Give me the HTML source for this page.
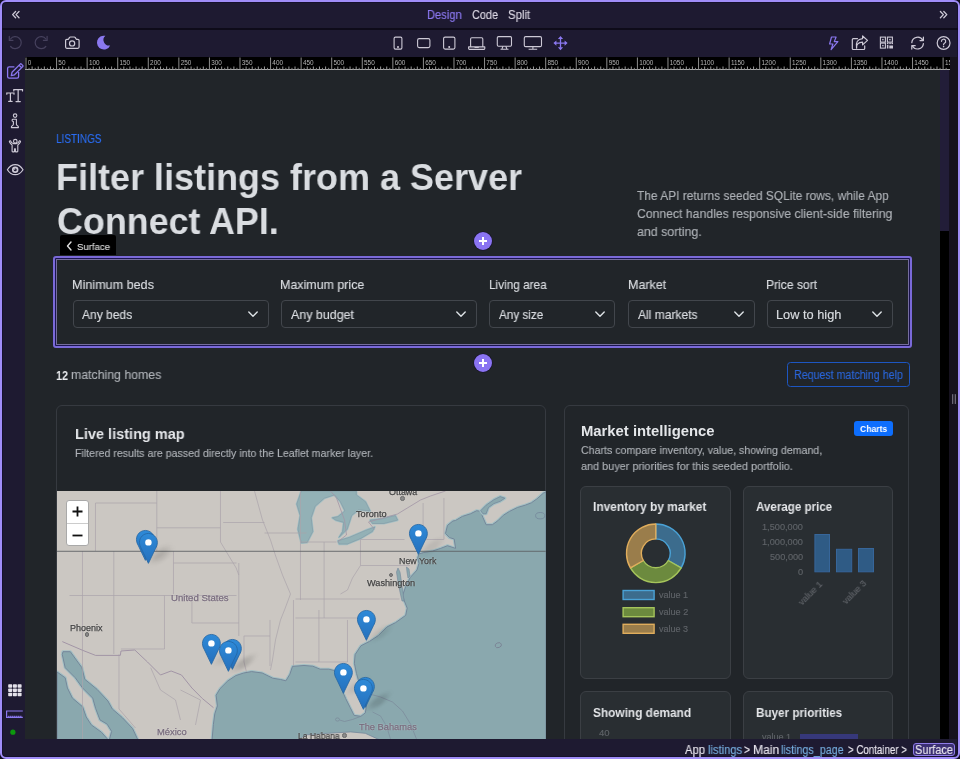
<!DOCTYPE html><html><head><meta charset="utf-8"><style>
html,body{margin:0;padding:0;width:960px;height:759px;overflow:hidden;background:#120e20}
.b,.t{position:absolute}
.t{white-space:nowrap;font-family:"Liberation Sans",sans-serif;will-change:transform;-webkit-text-stroke:0.15px currentColor}
svg{overflow:visible;will-change:transform}
</style></head><body>
<div class="b" style="left:0px;top:0px;width:960px;height:759px;box-sizing:border-box;border:2px solid #a08df8;border-radius:6px;background:#1e1a31;box-shadow:inset 0 0 0 1px #15102c"></div>
<div class="b" style="left:2px;top:28px;width:956px;height:1.5px;background:#0e0b19"></div>
<div class="b" style="left:25px;top:70px;width:915px;height:669px;background:#212529"></div>
<div class="b" style="left:940px;top:57px;width:10px;height:174px;background:#221d38"></div>
<div class="b" style="left:940px;top:231px;width:9px;height:508px;background:#000"></div>
<div class="b" style="left:949px;top:57px;width:9px;height:682px;background:#16121f"></div>
<svg class="b" style="left:951px;top:393px;" width="6" height="12" viewBox="0 0 6 12"><rect x="1" y="1" width="1.3" height="10" rx=".6" fill="#6a6675"/><rect x="3.7" y="1" width="1.3" height="10" rx=".6" fill="#6a6675"/></svg>
<svg class="b" style="left:25px;top:57px;overflow:hidden" width="925" height="13" viewBox="0 0 925 13"><rect x="0" y="0" width="925" height="13" fill="#000"/><rect x="0" y="12" width="925" height="1" fill="#a9a9a9"/><rect x="0.50" y="0.5" width="1" height="12" fill="#8d8d8d"/><text x="2.80" y="7.8" font-size="6.4" fill="#b4b4b4" font-family="Liberation Sans">0</text><rect x="3.56" y="10.8" width="1" height="2" fill="#8a8a8a"/><rect x="6.61" y="9.5" width="1" height="3" fill="#9a9a9a"/><rect x="9.67" y="10.8" width="1" height="2" fill="#8a8a8a"/><rect x="12.73" y="9.5" width="1" height="3" fill="#9a9a9a"/><rect x="15.79" y="10.8" width="1" height="2" fill="#8a8a8a"/><rect x="18.84" y="9.5" width="1" height="3" fill="#9a9a9a"/><rect x="21.90" y="10.8" width="1" height="2" fill="#8a8a8a"/><rect x="24.96" y="9.5" width="1" height="3" fill="#9a9a9a"/><rect x="28.01" y="10.8" width="1" height="2" fill="#8a8a8a"/><rect x="31.07" y="0.5" width="1" height="12" fill="#8d8d8d"/><text x="33.37" y="7.8" font-size="6.4" fill="#b4b4b4" font-family="Liberation Sans">50</text><rect x="34.13" y="10.8" width="1" height="2" fill="#8a8a8a"/><rect x="37.18" y="9.5" width="1" height="3" fill="#9a9a9a"/><rect x="40.24" y="10.8" width="1" height="2" fill="#8a8a8a"/><rect x="43.30" y="9.5" width="1" height="3" fill="#9a9a9a"/><rect x="46.35" y="10.8" width="1" height="2" fill="#8a8a8a"/><rect x="49.41" y="9.5" width="1" height="3" fill="#9a9a9a"/><rect x="52.47" y="10.8" width="1" height="2" fill="#8a8a8a"/><rect x="55.53" y="9.5" width="1" height="3" fill="#9a9a9a"/><rect x="58.58" y="10.8" width="1" height="2" fill="#8a8a8a"/><rect x="61.64" y="0.5" width="1" height="12" fill="#8d8d8d"/><text x="63.94" y="7.8" font-size="6.4" fill="#b4b4b4" font-family="Liberation Sans">100</text><rect x="64.70" y="10.8" width="1" height="2" fill="#8a8a8a"/><rect x="67.75" y="9.5" width="1" height="3" fill="#9a9a9a"/><rect x="70.81" y="10.8" width="1" height="2" fill="#8a8a8a"/><rect x="73.87" y="9.5" width="1" height="3" fill="#9a9a9a"/><rect x="76.92" y="10.8" width="1" height="2" fill="#8a8a8a"/><rect x="79.98" y="9.5" width="1" height="3" fill="#9a9a9a"/><rect x="83.04" y="10.8" width="1" height="2" fill="#8a8a8a"/><rect x="86.10" y="9.5" width="1" height="3" fill="#9a9a9a"/><rect x="89.15" y="10.8" width="1" height="2" fill="#8a8a8a"/><rect x="92.21" y="0.5" width="1" height="12" fill="#8d8d8d"/><text x="94.51" y="7.8" font-size="6.4" fill="#b4b4b4" font-family="Liberation Sans">150</text><rect x="95.27" y="10.8" width="1" height="2" fill="#8a8a8a"/><rect x="98.32" y="9.5" width="1" height="3" fill="#9a9a9a"/><rect x="101.38" y="10.8" width="1" height="2" fill="#8a8a8a"/><rect x="104.44" y="9.5" width="1" height="3" fill="#9a9a9a"/><rect x="107.50" y="10.8" width="1" height="2" fill="#8a8a8a"/><rect x="110.55" y="9.5" width="1" height="3" fill="#9a9a9a"/><rect x="113.61" y="10.8" width="1" height="2" fill="#8a8a8a"/><rect x="116.67" y="9.5" width="1" height="3" fill="#9a9a9a"/><rect x="119.72" y="10.8" width="1" height="2" fill="#8a8a8a"/><rect x="122.78" y="0.5" width="1" height="12" fill="#8d8d8d"/><text x="125.08" y="7.8" font-size="6.4" fill="#b4b4b4" font-family="Liberation Sans">200</text><rect x="125.84" y="10.8" width="1" height="2" fill="#8a8a8a"/><rect x="128.89" y="9.5" width="1" height="3" fill="#9a9a9a"/><rect x="131.95" y="10.8" width="1" height="2" fill="#8a8a8a"/><rect x="135.01" y="9.5" width="1" height="3" fill="#9a9a9a"/><rect x="138.06" y="10.8" width="1" height="2" fill="#8a8a8a"/><rect x="141.12" y="9.5" width="1" height="3" fill="#9a9a9a"/><rect x="144.18" y="10.8" width="1" height="2" fill="#8a8a8a"/><rect x="147.24" y="9.5" width="1" height="3" fill="#9a9a9a"/><rect x="150.29" y="10.8" width="1" height="2" fill="#8a8a8a"/><rect x="153.35" y="0.5" width="1" height="12" fill="#8d8d8d"/><text x="155.65" y="7.8" font-size="6.4" fill="#b4b4b4" font-family="Liberation Sans">250</text><rect x="156.41" y="10.8" width="1" height="2" fill="#8a8a8a"/><rect x="159.46" y="9.5" width="1" height="3" fill="#9a9a9a"/><rect x="162.52" y="10.8" width="1" height="2" fill="#8a8a8a"/><rect x="165.58" y="9.5" width="1" height="3" fill="#9a9a9a"/><rect x="168.63" y="10.8" width="1" height="2" fill="#8a8a8a"/><rect x="171.69" y="9.5" width="1" height="3" fill="#9a9a9a"/><rect x="174.75" y="10.8" width="1" height="2" fill="#8a8a8a"/><rect x="177.81" y="9.5" width="1" height="3" fill="#9a9a9a"/><rect x="180.86" y="10.8" width="1" height="2" fill="#8a8a8a"/><rect x="183.92" y="0.5" width="1" height="12" fill="#8d8d8d"/><text x="186.22" y="7.8" font-size="6.4" fill="#b4b4b4" font-family="Liberation Sans">300</text><rect x="186.98" y="10.8" width="1" height="2" fill="#8a8a8a"/><rect x="190.03" y="9.5" width="1" height="3" fill="#9a9a9a"/><rect x="193.09" y="10.8" width="1" height="2" fill="#8a8a8a"/><rect x="196.15" y="9.5" width="1" height="3" fill="#9a9a9a"/><rect x="199.20" y="10.8" width="1" height="2" fill="#8a8a8a"/><rect x="202.26" y="9.5" width="1" height="3" fill="#9a9a9a"/><rect x="205.32" y="10.8" width="1" height="2" fill="#8a8a8a"/><rect x="208.38" y="9.5" width="1" height="3" fill="#9a9a9a"/><rect x="211.43" y="10.8" width="1" height="2" fill="#8a8a8a"/><rect x="214.49" y="0.5" width="1" height="12" fill="#8d8d8d"/><text x="216.79" y="7.8" font-size="6.4" fill="#b4b4b4" font-family="Liberation Sans">350</text><rect x="217.55" y="10.8" width="1" height="2" fill="#8a8a8a"/><rect x="220.60" y="9.5" width="1" height="3" fill="#9a9a9a"/><rect x="223.66" y="10.8" width="1" height="2" fill="#8a8a8a"/><rect x="226.72" y="9.5" width="1" height="3" fill="#9a9a9a"/><rect x="229.78" y="10.8" width="1" height="2" fill="#8a8a8a"/><rect x="232.83" y="9.5" width="1" height="3" fill="#9a9a9a"/><rect x="235.89" y="10.8" width="1" height="2" fill="#8a8a8a"/><rect x="238.95" y="9.5" width="1" height="3" fill="#9a9a9a"/><rect x="242.00" y="10.8" width="1" height="2" fill="#8a8a8a"/><rect x="245.06" y="0.5" width="1" height="12" fill="#8d8d8d"/><text x="247.36" y="7.8" font-size="6.4" fill="#b4b4b4" font-family="Liberation Sans">400</text><rect x="248.12" y="10.8" width="1" height="2" fill="#8a8a8a"/><rect x="251.17" y="9.5" width="1" height="3" fill="#9a9a9a"/><rect x="254.23" y="10.8" width="1" height="2" fill="#8a8a8a"/><rect x="257.29" y="9.5" width="1" height="3" fill="#9a9a9a"/><rect x="260.34" y="10.8" width="1" height="2" fill="#8a8a8a"/><rect x="263.40" y="9.5" width="1" height="3" fill="#9a9a9a"/><rect x="266.46" y="10.8" width="1" height="2" fill="#8a8a8a"/><rect x="269.52" y="9.5" width="1" height="3" fill="#9a9a9a"/><rect x="272.57" y="10.8" width="1" height="2" fill="#8a8a8a"/><rect x="275.63" y="0.5" width="1" height="12" fill="#8d8d8d"/><text x="277.93" y="7.8" font-size="6.4" fill="#b4b4b4" font-family="Liberation Sans">450</text><rect x="278.69" y="10.8" width="1" height="2" fill="#8a8a8a"/><rect x="281.74" y="9.5" width="1" height="3" fill="#9a9a9a"/><rect x="284.80" y="10.8" width="1" height="2" fill="#8a8a8a"/><rect x="287.86" y="9.5" width="1" height="3" fill="#9a9a9a"/><rect x="290.92" y="10.8" width="1" height="2" fill="#8a8a8a"/><rect x="293.97" y="9.5" width="1" height="3" fill="#9a9a9a"/><rect x="297.03" y="10.8" width="1" height="2" fill="#8a8a8a"/><rect x="300.09" y="9.5" width="1" height="3" fill="#9a9a9a"/><rect x="303.14" y="10.8" width="1" height="2" fill="#8a8a8a"/><rect x="306.20" y="0.5" width="1" height="12" fill="#8d8d8d"/><text x="308.50" y="7.8" font-size="6.4" fill="#b4b4b4" font-family="Liberation Sans">500</text><rect x="309.26" y="10.8" width="1" height="2" fill="#8a8a8a"/><rect x="312.31" y="9.5" width="1" height="3" fill="#9a9a9a"/><rect x="315.37" y="10.8" width="1" height="2" fill="#8a8a8a"/><rect x="318.43" y="9.5" width="1" height="3" fill="#9a9a9a"/><rect x="321.49" y="10.8" width="1" height="2" fill="#8a8a8a"/><rect x="324.54" y="9.5" width="1" height="3" fill="#9a9a9a"/><rect x="327.60" y="10.8" width="1" height="2" fill="#8a8a8a"/><rect x="330.66" y="9.5" width="1" height="3" fill="#9a9a9a"/><rect x="333.71" y="10.8" width="1" height="2" fill="#8a8a8a"/><rect x="336.77" y="0.5" width="1" height="12" fill="#8d8d8d"/><text x="339.07" y="7.8" font-size="6.4" fill="#b4b4b4" font-family="Liberation Sans">550</text><rect x="339.83" y="10.8" width="1" height="2" fill="#8a8a8a"/><rect x="342.88" y="9.5" width="1" height="3" fill="#9a9a9a"/><rect x="345.94" y="10.8" width="1" height="2" fill="#8a8a8a"/><rect x="349.00" y="9.5" width="1" height="3" fill="#9a9a9a"/><rect x="352.06" y="10.8" width="1" height="2" fill="#8a8a8a"/><rect x="355.11" y="9.5" width="1" height="3" fill="#9a9a9a"/><rect x="358.17" y="10.8" width="1" height="2" fill="#8a8a8a"/><rect x="361.23" y="9.5" width="1" height="3" fill="#9a9a9a"/><rect x="364.28" y="10.8" width="1" height="2" fill="#8a8a8a"/><rect x="367.34" y="0.5" width="1" height="12" fill="#8d8d8d"/><text x="369.64" y="7.8" font-size="6.4" fill="#b4b4b4" font-family="Liberation Sans">600</text><rect x="370.40" y="10.8" width="1" height="2" fill="#8a8a8a"/><rect x="373.45" y="9.5" width="1" height="3" fill="#9a9a9a"/><rect x="376.51" y="10.8" width="1" height="2" fill="#8a8a8a"/><rect x="379.57" y="9.5" width="1" height="3" fill="#9a9a9a"/><rect x="382.62" y="10.8" width="1" height="2" fill="#8a8a8a"/><rect x="385.68" y="9.5" width="1" height="3" fill="#9a9a9a"/><rect x="388.74" y="10.8" width="1" height="2" fill="#8a8a8a"/><rect x="391.80" y="9.5" width="1" height="3" fill="#9a9a9a"/><rect x="394.85" y="10.8" width="1" height="2" fill="#8a8a8a"/><rect x="397.91" y="0.5" width="1" height="12" fill="#8d8d8d"/><text x="400.21" y="7.8" font-size="6.4" fill="#b4b4b4" font-family="Liberation Sans">650</text><rect x="400.97" y="10.8" width="1" height="2" fill="#8a8a8a"/><rect x="404.02" y="9.5" width="1" height="3" fill="#9a9a9a"/><rect x="407.08" y="10.8" width="1" height="2" fill="#8a8a8a"/><rect x="410.14" y="9.5" width="1" height="3" fill="#9a9a9a"/><rect x="413.19" y="10.8" width="1" height="2" fill="#8a8a8a"/><rect x="416.25" y="9.5" width="1" height="3" fill="#9a9a9a"/><rect x="419.31" y="10.8" width="1" height="2" fill="#8a8a8a"/><rect x="422.37" y="9.5" width="1" height="3" fill="#9a9a9a"/><rect x="425.42" y="10.8" width="1" height="2" fill="#8a8a8a"/><rect x="428.48" y="0.5" width="1" height="12" fill="#8d8d8d"/><text x="430.78" y="7.8" font-size="6.4" fill="#b4b4b4" font-family="Liberation Sans">700</text><rect x="431.54" y="10.8" width="1" height="2" fill="#8a8a8a"/><rect x="434.59" y="9.5" width="1" height="3" fill="#9a9a9a"/><rect x="437.65" y="10.8" width="1" height="2" fill="#8a8a8a"/><rect x="440.71" y="9.5" width="1" height="3" fill="#9a9a9a"/><rect x="443.76" y="10.8" width="1" height="2" fill="#8a8a8a"/><rect x="446.82" y="9.5" width="1" height="3" fill="#9a9a9a"/><rect x="449.88" y="10.8" width="1" height="2" fill="#8a8a8a"/><rect x="452.94" y="9.5" width="1" height="3" fill="#9a9a9a"/><rect x="455.99" y="10.8" width="1" height="2" fill="#8a8a8a"/><rect x="459.05" y="0.5" width="1" height="12" fill="#8d8d8d"/><text x="461.35" y="7.8" font-size="6.4" fill="#b4b4b4" font-family="Liberation Sans">750</text><rect x="462.11" y="10.8" width="1" height="2" fill="#8a8a8a"/><rect x="465.16" y="9.5" width="1" height="3" fill="#9a9a9a"/><rect x="468.22" y="10.8" width="1" height="2" fill="#8a8a8a"/><rect x="471.28" y="9.5" width="1" height="3" fill="#9a9a9a"/><rect x="474.33" y="10.8" width="1" height="2" fill="#8a8a8a"/><rect x="477.39" y="9.5" width="1" height="3" fill="#9a9a9a"/><rect x="480.45" y="10.8" width="1" height="2" fill="#8a8a8a"/><rect x="483.51" y="9.5" width="1" height="3" fill="#9a9a9a"/><rect x="486.56" y="10.8" width="1" height="2" fill="#8a8a8a"/><rect x="489.62" y="0.5" width="1" height="12" fill="#8d8d8d"/><text x="491.92" y="7.8" font-size="6.4" fill="#b4b4b4" font-family="Liberation Sans">800</text><rect x="492.68" y="10.8" width="1" height="2" fill="#8a8a8a"/><rect x="495.73" y="9.5" width="1" height="3" fill="#9a9a9a"/><rect x="498.79" y="10.8" width="1" height="2" fill="#8a8a8a"/><rect x="501.85" y="9.5" width="1" height="3" fill="#9a9a9a"/><rect x="504.90" y="10.8" width="1" height="2" fill="#8a8a8a"/><rect x="507.96" y="9.5" width="1" height="3" fill="#9a9a9a"/><rect x="511.02" y="10.8" width="1" height="2" fill="#8a8a8a"/><rect x="514.08" y="9.5" width="1" height="3" fill="#9a9a9a"/><rect x="517.13" y="10.8" width="1" height="2" fill="#8a8a8a"/><rect x="520.19" y="0.5" width="1" height="12" fill="#8d8d8d"/><text x="522.49" y="7.8" font-size="6.4" fill="#b4b4b4" font-family="Liberation Sans">850</text><rect x="523.25" y="10.8" width="1" height="2" fill="#8a8a8a"/><rect x="526.30" y="9.5" width="1" height="3" fill="#9a9a9a"/><rect x="529.36" y="10.8" width="1" height="2" fill="#8a8a8a"/><rect x="532.42" y="9.5" width="1" height="3" fill="#9a9a9a"/><rect x="535.48" y="10.8" width="1" height="2" fill="#8a8a8a"/><rect x="538.53" y="9.5" width="1" height="3" fill="#9a9a9a"/><rect x="541.59" y="10.8" width="1" height="2" fill="#8a8a8a"/><rect x="544.65" y="9.5" width="1" height="3" fill="#9a9a9a"/><rect x="547.70" y="10.8" width="1" height="2" fill="#8a8a8a"/><rect x="550.76" y="0.5" width="1" height="12" fill="#8d8d8d"/><text x="553.06" y="7.8" font-size="6.4" fill="#b4b4b4" font-family="Liberation Sans">900</text><rect x="553.82" y="10.8" width="1" height="2" fill="#8a8a8a"/><rect x="556.87" y="9.5" width="1" height="3" fill="#9a9a9a"/><rect x="559.93" y="10.8" width="1" height="2" fill="#8a8a8a"/><rect x="562.99" y="9.5" width="1" height="3" fill="#9a9a9a"/><rect x="566.04" y="10.8" width="1" height="2" fill="#8a8a8a"/><rect x="569.10" y="9.5" width="1" height="3" fill="#9a9a9a"/><rect x="572.16" y="10.8" width="1" height="2" fill="#8a8a8a"/><rect x="575.22" y="9.5" width="1" height="3" fill="#9a9a9a"/><rect x="578.27" y="10.8" width="1" height="2" fill="#8a8a8a"/><rect x="581.33" y="0.5" width="1" height="12" fill="#8d8d8d"/><text x="583.63" y="7.8" font-size="6.4" fill="#b4b4b4" font-family="Liberation Sans">950</text><rect x="584.39" y="10.8" width="1" height="2" fill="#8a8a8a"/><rect x="587.44" y="9.5" width="1" height="3" fill="#9a9a9a"/><rect x="590.50" y="10.8" width="1" height="2" fill="#8a8a8a"/><rect x="593.56" y="9.5" width="1" height="3" fill="#9a9a9a"/><rect x="596.62" y="10.8" width="1" height="2" fill="#8a8a8a"/><rect x="599.67" y="9.5" width="1" height="3" fill="#9a9a9a"/><rect x="602.73" y="10.8" width="1" height="2" fill="#8a8a8a"/><rect x="605.79" y="9.5" width="1" height="3" fill="#9a9a9a"/><rect x="608.84" y="10.8" width="1" height="2" fill="#8a8a8a"/><rect x="611.90" y="0.5" width="1" height="12" fill="#8d8d8d"/><text x="614.20" y="7.8" font-size="6.4" fill="#b4b4b4" font-family="Liberation Sans">1000</text><rect x="614.96" y="10.8" width="1" height="2" fill="#8a8a8a"/><rect x="618.01" y="9.5" width="1" height="3" fill="#9a9a9a"/><rect x="621.07" y="10.8" width="1" height="2" fill="#8a8a8a"/><rect x="624.13" y="9.5" width="1" height="3" fill="#9a9a9a"/><rect x="627.18" y="10.8" width="1" height="2" fill="#8a8a8a"/><rect x="630.24" y="9.5" width="1" height="3" fill="#9a9a9a"/><rect x="633.30" y="10.8" width="1" height="2" fill="#8a8a8a"/><rect x="636.36" y="9.5" width="1" height="3" fill="#9a9a9a"/><rect x="639.41" y="10.8" width="1" height="2" fill="#8a8a8a"/><rect x="642.47" y="0.5" width="1" height="12" fill="#8d8d8d"/><text x="644.77" y="7.8" font-size="6.4" fill="#b4b4b4" font-family="Liberation Sans">1050</text><rect x="645.53" y="10.8" width="1" height="2" fill="#8a8a8a"/><rect x="648.58" y="9.5" width="1" height="3" fill="#9a9a9a"/><rect x="651.64" y="10.8" width="1" height="2" fill="#8a8a8a"/><rect x="654.70" y="9.5" width="1" height="3" fill="#9a9a9a"/><rect x="657.75" y="10.8" width="1" height="2" fill="#8a8a8a"/><rect x="660.81" y="9.5" width="1" height="3" fill="#9a9a9a"/><rect x="663.87" y="10.8" width="1" height="2" fill="#8a8a8a"/><rect x="666.93" y="9.5" width="1" height="3" fill="#9a9a9a"/><rect x="669.98" y="10.8" width="1" height="2" fill="#8a8a8a"/><rect x="673.04" y="0.5" width="1" height="12" fill="#8d8d8d"/><text x="675.34" y="7.8" font-size="6.4" fill="#b4b4b4" font-family="Liberation Sans">1100</text><rect x="676.10" y="10.8" width="1" height="2" fill="#8a8a8a"/><rect x="679.15" y="9.5" width="1" height="3" fill="#9a9a9a"/><rect x="682.21" y="10.8" width="1" height="2" fill="#8a8a8a"/><rect x="685.27" y="9.5" width="1" height="3" fill="#9a9a9a"/><rect x="688.32" y="10.8" width="1" height="2" fill="#8a8a8a"/><rect x="691.38" y="9.5" width="1" height="3" fill="#9a9a9a"/><rect x="694.44" y="10.8" width="1" height="2" fill="#8a8a8a"/><rect x="697.50" y="9.5" width="1" height="3" fill="#9a9a9a"/><rect x="700.55" y="10.8" width="1" height="2" fill="#8a8a8a"/><rect x="703.61" y="0.5" width="1" height="12" fill="#8d8d8d"/><text x="705.91" y="7.8" font-size="6.4" fill="#b4b4b4" font-family="Liberation Sans">1150</text><rect x="706.67" y="10.8" width="1" height="2" fill="#8a8a8a"/><rect x="709.72" y="9.5" width="1" height="3" fill="#9a9a9a"/><rect x="712.78" y="10.8" width="1" height="2" fill="#8a8a8a"/><rect x="715.84" y="9.5" width="1" height="3" fill="#9a9a9a"/><rect x="718.89" y="10.8" width="1" height="2" fill="#8a8a8a"/><rect x="721.95" y="9.5" width="1" height="3" fill="#9a9a9a"/><rect x="725.01" y="10.8" width="1" height="2" fill="#8a8a8a"/><rect x="728.07" y="9.5" width="1" height="3" fill="#9a9a9a"/><rect x="731.12" y="10.8" width="1" height="2" fill="#8a8a8a"/><rect x="734.18" y="0.5" width="1" height="12" fill="#8d8d8d"/><text x="736.48" y="7.8" font-size="6.4" fill="#b4b4b4" font-family="Liberation Sans">1200</text><rect x="737.24" y="10.8" width="1" height="2" fill="#8a8a8a"/><rect x="740.29" y="9.5" width="1" height="3" fill="#9a9a9a"/><rect x="743.35" y="10.8" width="1" height="2" fill="#8a8a8a"/><rect x="746.41" y="9.5" width="1" height="3" fill="#9a9a9a"/><rect x="749.47" y="10.8" width="1" height="2" fill="#8a8a8a"/><rect x="752.52" y="9.5" width="1" height="3" fill="#9a9a9a"/><rect x="755.58" y="10.8" width="1" height="2" fill="#8a8a8a"/><rect x="758.64" y="9.5" width="1" height="3" fill="#9a9a9a"/><rect x="761.69" y="10.8" width="1" height="2" fill="#8a8a8a"/><rect x="764.75" y="0.5" width="1" height="12" fill="#8d8d8d"/><text x="767.05" y="7.8" font-size="6.4" fill="#b4b4b4" font-family="Liberation Sans">1250</text><rect x="767.81" y="10.8" width="1" height="2" fill="#8a8a8a"/><rect x="770.86" y="9.5" width="1" height="3" fill="#9a9a9a"/><rect x="773.92" y="10.8" width="1" height="2" fill="#8a8a8a"/><rect x="776.98" y="9.5" width="1" height="3" fill="#9a9a9a"/><rect x="780.03" y="10.8" width="1" height="2" fill="#8a8a8a"/><rect x="783.09" y="9.5" width="1" height="3" fill="#9a9a9a"/><rect x="786.15" y="10.8" width="1" height="2" fill="#8a8a8a"/><rect x="789.21" y="9.5" width="1" height="3" fill="#9a9a9a"/><rect x="792.26" y="10.8" width="1" height="2" fill="#8a8a8a"/><rect x="795.32" y="0.5" width="1" height="12" fill="#8d8d8d"/><text x="797.62" y="7.8" font-size="6.4" fill="#b4b4b4" font-family="Liberation Sans">1300</text><rect x="798.38" y="10.8" width="1" height="2" fill="#8a8a8a"/><rect x="801.43" y="9.5" width="1" height="3" fill="#9a9a9a"/><rect x="804.49" y="10.8" width="1" height="2" fill="#8a8a8a"/><rect x="807.55" y="9.5" width="1" height="3" fill="#9a9a9a"/><rect x="810.61" y="10.8" width="1" height="2" fill="#8a8a8a"/><rect x="813.66" y="9.5" width="1" height="3" fill="#9a9a9a"/><rect x="816.72" y="10.8" width="1" height="2" fill="#8a8a8a"/><rect x="819.78" y="9.5" width="1" height="3" fill="#9a9a9a"/><rect x="822.83" y="10.8" width="1" height="2" fill="#8a8a8a"/><rect x="825.89" y="0.5" width="1" height="12" fill="#8d8d8d"/><text x="828.19" y="7.8" font-size="6.4" fill="#b4b4b4" font-family="Liberation Sans">1350</text><rect x="828.95" y="10.8" width="1" height="2" fill="#8a8a8a"/><rect x="832.00" y="9.5" width="1" height="3" fill="#9a9a9a"/><rect x="835.06" y="10.8" width="1" height="2" fill="#8a8a8a"/><rect x="838.12" y="9.5" width="1" height="3" fill="#9a9a9a"/><rect x="841.17" y="10.8" width="1" height="2" fill="#8a8a8a"/><rect x="844.23" y="9.5" width="1" height="3" fill="#9a9a9a"/><rect x="847.29" y="10.8" width="1" height="2" fill="#8a8a8a"/><rect x="850.35" y="9.5" width="1" height="3" fill="#9a9a9a"/><rect x="853.40" y="10.8" width="1" height="2" fill="#8a8a8a"/><rect x="856.46" y="0.5" width="1" height="12" fill="#8d8d8d"/><text x="858.76" y="7.8" font-size="6.4" fill="#b4b4b4" font-family="Liberation Sans">1400</text><rect x="859.52" y="10.8" width="1" height="2" fill="#8a8a8a"/><rect x="862.57" y="9.5" width="1" height="3" fill="#9a9a9a"/><rect x="865.63" y="10.8" width="1" height="2" fill="#8a8a8a"/><rect x="868.69" y="9.5" width="1" height="3" fill="#9a9a9a"/><rect x="871.75" y="10.8" width="1" height="2" fill="#8a8a8a"/><rect x="874.80" y="9.5" width="1" height="3" fill="#9a9a9a"/><rect x="877.86" y="10.8" width="1" height="2" fill="#8a8a8a"/><rect x="880.92" y="9.5" width="1" height="3" fill="#9a9a9a"/><rect x="883.97" y="10.8" width="1" height="2" fill="#8a8a8a"/><rect x="887.03" y="0.5" width="1" height="12" fill="#8d8d8d"/><text x="889.33" y="7.8" font-size="6.4" fill="#b4b4b4" font-family="Liberation Sans">1450</text><rect x="890.09" y="10.8" width="1" height="2" fill="#8a8a8a"/><rect x="893.14" y="9.5" width="1" height="3" fill="#9a9a9a"/><rect x="896.20" y="10.8" width="1" height="2" fill="#8a8a8a"/><rect x="899.26" y="9.5" width="1" height="3" fill="#9a9a9a"/><rect x="902.31" y="10.8" width="1" height="2" fill="#8a8a8a"/><rect x="905.37" y="9.5" width="1" height="3" fill="#9a9a9a"/><rect x="908.43" y="10.8" width="1" height="2" fill="#8a8a8a"/><rect x="911.49" y="9.5" width="1" height="3" fill="#9a9a9a"/><rect x="914.54" y="10.8" width="1" height="2" fill="#8a8a8a"/><rect x="917.60" y="0.5" width="1" height="12" fill="#8d8d8d"/><text x="919.90" y="7.8" font-size="6.4" fill="#b4b4b4" font-family="Liberation Sans">1500</text><rect x="920.66" y="10.8" width="1" height="2" fill="#8a8a8a"/></svg>
<svg class="b" style="left:0px;top:0px;" width="960" height="28" viewBox="0 0 960 28"><g fill="none" stroke="#cdc9d6" stroke-width="1.3" stroke-linecap="round" stroke-linejoin="round"><path d="M15.6 11.5 L12.6 14.6 L15.6 17.7 M19 11.5 L16 14.6 L19 17.7"/><path d="M940.4 11.5 L943.4 14.6 L940.4 17.7 M943.8 11.5 L946.8 14.6 L943.8 17.7"/></g></svg>
<div class="t" style="left:427.29px;top:8.56px;font-size:12.21px;line-height:12.21px;color:#8b78f0;transform:scaleX(0.9113);transform-origin:0 0;">Design</div>
<div class="t" style="left:472.05px;top:8.56px;font-size:12.21px;line-height:12.21px;color:#dcd8e4;transform:scaleX(0.8920);transform-origin:0 0;">Code</div>
<div class="t" style="left:508.48px;top:8.56px;font-size:12.21px;line-height:12.21px;color:#dcd8e4;transform:scaleX(0.9304);transform-origin:0 0;">Split</div>
<svg class="b" style="left:0px;top:0px;" width="960" height="57" viewBox="0 0 960 57"><g fill="none" stroke="#46415d" stroke-width="1.2" stroke-linecap="round"><path d="M10.5 39 A6 6 0 1 1 10.6 46.5"/><path d="M9.3 36.4 v3.9 h3.7"/><path d="M45.9 39 A6 6 0 1 0 45.8 46.5"/><path d="M47.1 36.4 v3.9 h-3.7"/></g><g fill="none" stroke="#cdc9d6" stroke-width="1.2" stroke-linejoin="round"><path d="M66.8 39.3 h1.6 l1 -1.7 q.4 -.6 1 -.6 h3.9 q.6 0 1 .6 l1 1.7 h1.6 q1.2 0 1.2 1.2 v6.6 q0 1.2 -1.2 1.2 h-11.1 q-1.2 0 -1.2 -1.2 v-6.6 q0 -1.2 1.2 -1.2z"/><circle cx="72.1" cy="43.4" r="2.6"/></g><path fill="#8b78f0" d="M105.39 35.83 A6.9 6.9 0 1 0 110.16 45.41 A5.53 5.53 0 0 1 105.39 35.83z"/><g fill="none" stroke="#cdc9d6" stroke-width="1.1" stroke-linejoin="round"><rect x="394.1" y="37.1" width="7.8" height="12" rx="1.3"/><circle cx="398" cy="47" r=".45" fill="#cdc9d6"/><rect x="417.6" y="38.6" width="12.3" height="9" rx="1.6"/><rect x="443.6" y="37.1" width="11.3" height="12" rx="1.5"/><circle cx="449.2" cy="47" r=".45" fill="#cdc9d6"/><path d="M470.6 46.5 v-7.6 a1.2 1.2 0 0 1 1.2 -1.2 h9.8 a1.2 1.2 0 0 1 1.2 1.2 v7.6 M468.6 46.9 h16.2 v1.3 a1.2 1.2 0 0 1 -1.2 1.2 h-13.8 a1.2 1.2 0 0 1 -1.2 -1.2z M474.5 47.5 h4.3"/><rect x="497.3" y="36.6" width="14.2" height="9.6" rx="1.2"/><path d="M503 46.2 l-1 2.6 M505.8 46.2 l1 2.6 M500.5 49.2 h8"/><rect x="524.3" y="36.6" width="17.2" height="10" rx="1.4"/><path d="M532.9 46.6 v2.4 M528.6 49.3 h8.6"/></g><g stroke="#8b78f0" stroke-width="1.3" fill="none"><path d="M560.5 38.5 v9.2 M555.9 43.1 h9.2"/></g><g fill="#8b78f0"><path d="M560.5 36 l2.6 3 h-5.2z M560.5 50.2 l2.6 -3 h-5.2z M553.4 43.1 l3 -2.6 v5.2z M567.6 43.1 l-3 -2.6 v5.2z"/></g><path fill="none" stroke="#8b78f0" stroke-width="1.2" stroke-linejoin="round" d="M831.5 37 h4.6 l-1.8 4.6 h3.6 l-6.8 8 l1.8 -5.6 h-3.3z"/><g fill="none" stroke="#cdc9d6" stroke-width="1.2" stroke-linejoin="round" stroke-linecap="round"><path d="M857.5 38.7 h-4.2 q-1 0 -1 1 v8.8 q0 1 1 1 h10.4 q1 0 1 -1 v-2.6"/><path d="M856.6 48.2 q-.6 -5.6 6 -6 v2.7 l4.9 -4.5 l-4.9 -4.4 v2.6 q-7.6 .6 -6 9.6z"/></g><g fill="none" stroke="#cdc9d6" stroke-width="1.1"><rect x="880.4" y="37.1" width="5" height="5"/><rect x="887.4" y="37.1" width="5" height="5"/><rect x="880.4" y="43.1" width="5" height="5"/></g><g fill="#cdc9d6"><rect x="882.2" y="38.9" width="1.4" height="1.4"/><rect x="889.2" y="38.9" width="1.4" height="1.4"/><rect x="882.2" y="44.9" width="1.4" height="1.4"/><rect x="886.9" y="42.6" width="1.5" height="1.5"/><rect x="889.3" y="42.6" width="1.5" height="1.5"/><rect x="891.5" y="42.6" width="1.5" height="1.5"/><rect x="886.9" y="44.9" width="1.5" height="3.6"/><rect x="889.3" y="45.5" width="3.7" height="3"/></g><g fill="none" stroke="#cdc9d6" stroke-width="1.2" stroke-linecap="round" stroke-linejoin="round"><path d="M911.8 42.6 A5.9 5.9 0 0 1 922.9 40.4"/><path d="M923.4 43.6 A5.9 5.9 0 0 1 912.3 45.8"/><path d="M923.4 37.2 v3.4 h-3.4 M911.8 49.1 v-3.4 h3.4"/><circle cx="943.6" cy="43" r="6.4"/><path d="M941.5 41.3 a2.1 2.1 0 1 1 3 1.9 c-.6 .3 -.9 .7 -.9 1.3 v.2"/></g><circle cx="943.6" cy="46.6" r=".8" fill="#cdc9d6"/></svg>
<svg class="b" style="left:0px;top:0px;" width="26" height="759" viewBox="0 0 26 759"><g fill="none" stroke="#8b78f0" stroke-width="1.3" stroke-linejoin="round"><path d="M18.6 72 v4.6 q0 1.6 -1.6 1.6 h-7.8 q-1.6 0 -1.6 -1.6 v-8.2 q0 -1.6 1.6 -1.6 h5.2"/><path d="M11.3 75.6 l.7 -3.3 l8.2 -8.2 q.6 -.6 1.2 0 l1.3 1.3 q.6 .6 0 1.2 l-8.2 8.2z M19.1 65.2 l2.5 2.5"/></g><g fill="none" stroke="#cdc9d6" stroke-width="1.2" stroke-linecap="round"><path d="M6.8 94.2 v-1.2 h7.2 v1.2 M10.4 93 v8.4 M8.7 101.4 h3.4"/><path d="M13.8 91 v-1.4 h8.7 v1.4 M18.15 89.6 v12 M16 101.6 h4.3"/></g><g fill="none" stroke="#cdc9d6" stroke-width="1.1" stroke-linejoin="round"><circle cx="15.1" cy="115.6" r="1.75"/><path d="M13.1 119.3 h3.3 v4.9 q0 .9 1.1 1.6 q.9 .5 .9 1.2 v.6 h-7 v-.6 q0-.7.9-1.2 q1.1-.7 1.1-1.6 v-2.7 h-.4 q-.9 0-.9-.9 v-.4 q0-.9.9-.9z"/></g><g fill="none" stroke="#cdc9d6" stroke-width="1.1" stroke-linejoin="round" stroke-linecap="round"><circle cx="15.3" cy="141.2" r="1.8"/><path d="M13.3 143.6 q-1.6 -.5 -2.4 -2.2 q-.5 -.9 -1.2 -.5 q-.6 .4 -.2 1.2 q.9 1.9 2.6 2.9 v6.3 q0 .6 .6 .6 h1.3 q.5 0 .5 -.5 v-2.6 h.9 v2.6 q0 .5 .5 .5 h1.3 q.6 0 .6 -.6 v-6.3 q1.7 -1 2.6 -2.9 q.4 -.8 -.2 -1.2 q-.7 -.4 -1.2 .5 q-.8 1.7 -2.4 2.2z"/></g><g fill="none" stroke="#cdc9d6" stroke-width="1.2"><path d="M7.4 169.7 c2 -3.2 4.8 -5 7.8 -5 s5.8 1.8 7.8 5 c-2 3.2 -4.8 5 -7.8 5 s-5.8 -1.8 -7.8 -5z"/><circle cx="15.2" cy="169.7" r="2.4" stroke-width="1.7"/></g><circle cx="14.6" cy="169" r=".8" fill="#cdc9d6"/><rect x="8.2" y="684.3" width="4" height="3.5" rx=".7" fill="#e4e2ea"/><rect x="12.9" y="684.3" width="4" height="3.5" rx=".7" fill="#e4e2ea"/><rect x="17.6" y="684.3" width="4" height="3.5" rx=".7" fill="#e4e2ea"/><rect x="8.2" y="688.5" width="4" height="3.5" rx=".7" fill="#e4e2ea"/><rect x="12.9" y="688.5" width="4" height="3.5" rx=".7" fill="#e4e2ea"/><rect x="17.6" y="688.5" width="4" height="3.5" rx=".7" fill="#e4e2ea"/><rect x="8.2" y="692.7" width="4" height="3.5" rx=".7" fill="#e4e2ea"/><rect x="12.9" y="692.7" width="4" height="3.5" rx=".7" fill="#e4e2ea"/><rect x="17.6" y="692.7" width="4" height="3.5" rx=".7" fill="#e4e2ea"/><path fill="none" stroke="#8b78f0" stroke-width="1.2" d="M22.8 711 h-16.2 v6.4 h16.2 M8.8 717.4 v-1.6 M10.8 717.4 v-1.6 M12.8 717.4 v-1.6 M14.8 717.4 v-1.6 M16.8 717.4 v-1.6 M18.8 717.4 v-1.6 M20.8 717.4 v-1.6"/><circle cx="12.9" cy="732.2" r="2.6" fill="#0c980d"/></svg>
<div class="t" style="left:685.18px;top:744.29px;font-size:12.65px;line-height:12.65px;color:#e6e3ec;transform:scaleX(0.8883);transform-origin:0 0;">App</div>
<div class="t" style="left:708.05px;top:744.29px;font-size:12.65px;line-height:12.65px;color:#73a9d9;transform:scaleX(0.8834);transform-origin:0 0;">listings</div>
<div class="t" style="left:744.49px;top:744.29px;font-size:12.65px;line-height:12.65px;color:#e6e3ec;transform:scaleX(0.8135);transform-origin:0 0;">&gt;</div>
<div class="t" style="left:753.40px;top:744.29px;font-size:12.65px;line-height:12.65px;color:#e6e3ec;transform:scaleX(0.9625);transform-origin:0 0;">Main</div>
<div class="t" style="left:781.48px;top:744.29px;font-size:12.65px;line-height:12.65px;color:#73a9d9;transform:scaleX(0.8491);transform-origin:0 0;">listings_page</div>
<div class="t" style="left:847.52px;top:744.29px;font-size:12.65px;line-height:12.65px;color:#e6e3ec;transform:scaleX(0.7691);transform-origin:0 0;">&gt; Container &gt;</div>
<div class="b" style="left:913px;top:743.3px;width:42px;height:13px;box-sizing:border-box;border:1px solid #8f7ce8;border-radius:3px;background:#3b2f73"></div>
<div class="t" style="left:915.00px;top:744.29px;font-size:12.65px;line-height:12.65px;color:#e6e3ec;transform:scaleX(0.8714);transform-origin:0 0;">Surface</div>
<div class="b" style="left:0;top:0;width:940px;height:739px;clip-path:inset(70px 0 0 25px);overflow:hidden">
<div class="t" style="left:55.98px;top:133.26px;font-size:12.21px;line-height:12.21px;color:#2a6cf0;transform:scaleX(0.8174);transform-origin:0 0;">LISTINGS</div>
<div class="t" style="left:56.29px;top:159.22px;font-size:37.06px;line-height:37.06px;color:#dadde1;font-weight:bold;-webkit-text-stroke:0;transform:scaleX(0.9716);transform-origin:0 0;">Filter listings from a Server</div>
<div class="t" style="left:56.73px;top:203.02px;font-size:37.06px;line-height:37.06px;color:#dadde1;font-weight:bold;-webkit-text-stroke:0;transform:scaleX(0.9682);transform-origin:0 0;">Connect API.</div>
<div class="t" style="left:636.93px;top:189.05px;font-size:13.52px;line-height:13.52px;color:#adb1b6;transform:scaleX(0.8840);transform-origin:0 0;">The API returns seeded SQLite rows, while App</div>
<div class="t" style="left:636.58px;top:207.35px;font-size:13.52px;line-height:13.52px;color:#adb1b6;transform:scaleX(0.9039);transform-origin:0 0;">Connect handles responsive client-side filtering</div>
<div class="t" style="left:636.67px;top:225.15px;font-size:13.52px;line-height:13.52px;color:#adb1b6;transform:scaleX(0.9181);transform-origin:0 0;">and sorting.</div>
<div class="b" style="left:53px;top:256px;width:859px;height:92px;box-sizing:border-box;border:2px solid #7a69d8;border-radius:3px;background:#1b1450"></div>
<div class="b" style="left:56px;top:259px;width:853px;height:86px;box-sizing:border-box;border:1px solid #756d9e;background:#212529"></div>
<div class="t" style="left:71.77px;top:278.57px;font-size:12.79px;line-height:12.79px;color:#dadde1;transform:scaleX(0.9859);transform-origin:0 0;">Minimum beds</div>
<div class="b" style="left:72.5px;top:299.6px;width:196.3px;height:28.9px;box-sizing:border-box;border:1px solid #42464c;border-radius:4px"></div>
<div class="t" style="left:82.08px;top:308.57px;font-size:12.79px;line-height:12.79px;color:#dadde1;transform:scaleX(0.9415);transform-origin:0 0;">Any beds</div>
<svg class="b" style="left:247.8px;top:310.8px;" width="10" height="7" viewBox="0 0 10 7"><path d="M0.8 1 L5 5.2 L9.2 1" fill="none" stroke="#dee2e6" stroke-width="1.4" stroke-linecap="round" stroke-linejoin="round"/></svg>
<div class="t" style="left:280.28px;top:278.57px;font-size:12.79px;line-height:12.79px;color:#dadde1;transform:scaleX(0.9726);transform-origin:0 0;">Maximum price</div>
<div class="b" style="left:281px;top:299.6px;width:195.7px;height:28.9px;box-sizing:border-box;border:1px solid #42464c;border-radius:4px"></div>
<div class="t" style="left:290.58px;top:308.57px;font-size:12.79px;line-height:12.79px;color:#dadde1;transform:scaleX(0.9738);transform-origin:0 0;">Any budget</div>
<svg class="b" style="left:455.7px;top:310.8px;" width="10" height="7" viewBox="0 0 10 7"><path d="M0.8 1 L5 5.2 L9.2 1" fill="none" stroke="#dee2e6" stroke-width="1.4" stroke-linecap="round" stroke-linejoin="round"/></svg>
<div class="t" style="left:488.63px;top:278.57px;font-size:12.79px;line-height:12.79px;color:#dadde1;transform:scaleX(0.9224);transform-origin:0 0;">Living area</div>
<div class="b" style="left:489.3px;top:299.6px;width:126.2px;height:28.9px;box-sizing:border-box;border:1px solid #42464c;border-radius:4px"></div>
<div class="t" style="left:498.88px;top:308.57px;font-size:12.79px;line-height:12.79px;color:#dadde1;transform:scaleX(0.9163);transform-origin:0 0;">Any size</div>
<svg class="b" style="left:594.5px;top:310.8px;" width="10" height="7" viewBox="0 0 10 7"><path d="M0.8 1 L5 5.2 L9.2 1" fill="none" stroke="#dee2e6" stroke-width="1.4" stroke-linecap="round" stroke-linejoin="round"/></svg>
<div class="t" style="left:627.57px;top:278.57px;font-size:12.79px;line-height:12.79px;color:#dadde1;transform:scaleX(0.9777);transform-origin:0 0;">Market</div>
<div class="b" style="left:628.3px;top:299.6px;width:126.5px;height:28.9px;box-sizing:border-box;border:1px solid #42464c;border-radius:4px"></div>
<div class="t" style="left:637.88px;top:308.57px;font-size:12.79px;line-height:12.79px;color:#dadde1;transform:scaleX(0.9416);transform-origin:0 0;">All markets</div>
<svg class="b" style="left:733.8px;top:310.8px;" width="10" height="7" viewBox="0 0 10 7"><path d="M0.8 1 L5 5.2 L9.2 1" fill="none" stroke="#dee2e6" stroke-width="1.4" stroke-linecap="round" stroke-linejoin="round"/></svg>
<div class="t" style="left:766.31px;top:278.57px;font-size:12.79px;line-height:12.79px;color:#dadde1;transform:scaleX(0.9457);transform-origin:0 0;">Price sort</div>
<div class="b" style="left:767px;top:299.6px;width:126.3px;height:28.9px;box-sizing:border-box;border:1px solid #42464c;border-radius:4px"></div>
<div class="t" style="left:775.56px;top:308.57px;font-size:12.79px;line-height:12.79px;color:#dadde1;transform:scaleX(0.9931);transform-origin:0 0;">Low to high</div>
<svg class="b" style="left:872.3px;top:310.8px;" width="10" height="7" viewBox="0 0 10 7"><path d="M0.8 1 L5 5.2 L9.2 1" fill="none" stroke="#dee2e6" stroke-width="1.4" stroke-linecap="round" stroke-linejoin="round"/></svg>
<div class="b" style="left:59.8px;top:235px;width:56.5px;height:20px;background:#000;border-radius:2px 2px 0 0"></div>
<svg class="b" style="left:66.3px;top:240.8px;" width="6" height="10" viewBox="0 0 6 10"><path d="M5 1 L1.5 5 L5 9" fill="none" stroke="#e0e0e0" stroke-width="1.4" stroke-linecap="round" stroke-linejoin="round"/></svg>
<div class="t" style="left:77.36px;top:241.63px;font-size:9.88px;line-height:9.88px;color:#dcdcdc;transform:scaleX(0.9741);transform-origin:0 0;">Surface</div>
<svg class="b" style="left:473px;top:231.2px;" width="20" height="20" viewBox="0 0 20 20"><circle cx="10" cy="10" r="9.6" fill="#16112a"/><circle cx="10" cy="10" r="9" fill="#8a74f2"/><path d="M10 6 v8 M6 10 h8" stroke="#fff" stroke-width="2"/></svg>
<svg class="b" style="left:473px;top:353px;" width="20" height="20" viewBox="0 0 20 20"><circle cx="10" cy="10" r="9.6" fill="#16112a"/><circle cx="10" cy="10" r="9" fill="#8a74f2"/><path d="M10 6 v8 M6 10 h8" stroke="#fff" stroke-width="2"/></svg>
<div class="t" style="left:55.72px;top:369.23px;font-size:13.08px;line-height:13.08px;color:#e8eaed;font-weight:bold;-webkit-text-stroke:0;transform:scaleX(0.8257);transform-origin:0 0;">12</div>
<div class="t" style="left:71.18px;top:369.47px;font-size:12.79px;line-height:12.79px;color:#adb1b6;transform:scaleX(0.9619);transform-origin:0 0;">matching homes</div>
<div class="b" style="left:787px;top:362px;width:122.8px;height:24.8px;box-sizing:border-box;border:1.2px solid #1d56c2;border-radius:3.5px"></div>
<div class="t" style="left:793.73px;top:369.49px;font-size:12.65px;line-height:12.65px;color:#2a64d6;transform:scaleX(0.8418);transform-origin:0 0;">Request matching help</div>
<div class="b" style="left:56.2px;top:405.2px;width:490.1px;height:400px;box-sizing:border-box;border:1px solid #363a40;border-radius:6px;background:#212529"></div>
<div class="b" style="left:563.9px;top:404.9px;width:344.8px;height:400px;box-sizing:border-box;border:1px solid #363a40;border-radius:6px;background:#212529"></div>
<div class="t" style="left:75.33px;top:425.85px;font-size:15.41px;line-height:15.41px;color:#e4e6e9;font-weight:bold;-webkit-text-stroke:0;transform:scaleX(0.9417);transform-origin:0 0;">Live listing map</div>
<div class="t" style="left:75.43px;top:448.00px;font-size:11.34px;line-height:11.34px;color:#adb1b6;transform:scaleX(0.9354);transform-origin:0 0;">Filtered results are passed directly into the Leaflet marker layer.</div>
<div class="t" style="left:580.51px;top:423.74px;font-size:14.83px;line-height:14.83px;color:#e4e6e9;font-weight:bold;-webkit-text-stroke:0;">Market intelligence</div>
<div class="t" style="left:580.76px;top:445.40px;font-size:11.34px;line-height:11.34px;color:#adb1b6;transform:scaleX(0.9375);transform-origin:0 0;">Charts compare inventory, value, showing demand,</div>
<div class="t" style="left:580.84px;top:461.20px;font-size:11.34px;line-height:11.34px;color:#adb1b6;transform:scaleX(0.9607);transform-origin:0 0;">and buyer priorities for this seeded portfolio.</div>
<div class="b" style="left:853.6px;top:421px;width:39.4px;height:14.5px;background:#0d6efd;border-radius:3px"></div>
<div class="t" style="left:859.65px;top:423.63px;font-size:9.88px;line-height:9.88px;color:#fff;font-weight:bold;-webkit-text-stroke:0;transform:scaleX(0.8693);transform-origin:0 0;">Charts</div>
<div class="b" style="left:580.3px;top:486.2px;width:150.4px;height:193px;box-sizing:border-box;border:1px solid #3b3f44;border-radius:6px;background:#292e32"></div>
<div class="b" style="left:743.3px;top:486.4px;width:150px;height:192.8px;box-sizing:border-box;border:1px solid #3b3f44;border-radius:6px;background:#292e32"></div>
<div class="b" style="left:580.3px;top:691.3px;width:150.4px;height:100px;box-sizing:border-box;border:1px solid #3b3f44;border-radius:6px;background:#292e32"></div>
<div class="b" style="left:743.3px;top:691.3px;width:150px;height:100px;box-sizing:border-box;border:1px solid #3b3f44;border-radius:6px;background:#292e32"></div>
<div class="t" style="left:592.50px;top:500.84px;font-size:12.35px;line-height:12.35px;color:#e4e6e9;font-weight:bold;-webkit-text-stroke:0;transform:scaleX(0.9666);transform-origin:0 0;">Inventory by market</div>
<div class="t" style="left:755.91px;top:500.94px;font-size:12.35px;line-height:12.35px;color:#e4e6e9;font-weight:bold;-webkit-text-stroke:0;transform:scaleX(0.9378);transform-origin:0 0;">Average price</div>
<div class="t" style="left:592.96px;top:707.04px;font-size:12.35px;line-height:12.35px;color:#e4e6e9;font-weight:bold;-webkit-text-stroke:0;transform:scaleX(0.9598);transform-origin:0 0;">Showing demand</div>
<div class="t" style="left:755.52px;top:707.04px;font-size:12.35px;line-height:12.35px;color:#e4e6e9;font-weight:bold;-webkit-text-stroke:0;transform:scaleX(0.9450);transform-origin:0 0;">Buyer priorities</div>
<svg class="b" style="left:600px;top:500px;" width="100" height="140" viewBox="0 0 100 140"><g transform="translate(-600,-500)"><path d="M655.80 524.00 A29.3 29.3 0 0 1 681.17 567.95 L668.27 560.50 A14.4 14.4 0 0 0 655.80 538.90Z" fill="#3c6c8d" stroke="#4aa2d6" stroke-width="1.4" stroke-linejoin="round"/><path d="M681.17 567.95 A29.3 29.3 0 0 1 630.43 567.95 L643.33 560.50 A14.4 14.4 0 0 0 668.27 560.50Z" fill="#6c8a3e" stroke="#a5c45b" stroke-width="1.4" stroke-linejoin="round"/><path d="M630.43 567.95 A29.3 29.3 0 0 1 655.80 524.00 L655.80 538.90 A14.4 14.4 0 0 0 643.33 560.50Z" fill="#9a7d4b" stroke="#e0ad5c" stroke-width="1.4" stroke-linejoin="round"/><rect x="623.1" y="590.5" width="31" height="9" fill="#3c6c8d" stroke="#4aa2d6" stroke-width="1.4"/><rect x="623.1" y="607.7" width="31" height="9" fill="#6c8a3e" stroke="#a5c45b" stroke-width="1.4"/><rect x="623.1" y="624.3000000000001" width="31" height="9" fill="#9a7d4b" stroke="#e0ad5c" stroke-width="1.4"/></g></svg>
<div class="t" style="left:658.87px;top:590.97px;font-size:9.01px;line-height:9.01px;color:#5f6368;transform:scaleX(1.0041);transform-origin:0 0;">value 1</div>
<div class="t" style="left:658.87px;top:607.97px;font-size:9.01px;line-height:9.01px;color:#5f6368;transform:scaleX(1.0046);transform-origin:0 0;">value 2</div>
<div class="t" style="left:658.87px;top:624.57px;font-size:9.01px;line-height:9.01px;color:#5f6368;">value 3</div>
<div class="t" style="left:761.85px;top:523.11px;font-size:9.2px;line-height:9.2px;color:#5f6368;">1,500,000</div>
<div class="t" style="left:761.85px;top:537.91px;font-size:9.2px;line-height:9.2px;color:#5f6368;">1,000,000</div>
<div class="t" style="left:769.88px;top:552.61px;font-size:9.2px;line-height:9.2px;color:#5f6368;">500,000</div>
<div class="t" style="left:798.04px;top:567.91px;font-size:9.2px;line-height:9.2px;color:#5f6368;">0</div>
<svg class="b" style="left:800px;top:520px;" width="90" height="60" viewBox="0 0 90 60"><g transform="translate(-800,-520)"><rect x="814.9" y="534.5" width="14.600000000000023" height="37.299999999999955" fill="#2f5b85" stroke="#37669a" stroke-width="1"/><rect x="836.5" y="549.3" width="15.200000000000045" height="22.5" fill="#2f5b85" stroke="#37669a" stroke-width="1"/><rect x="858.5" y="548.5" width="15" height="23.299999999999955" fill="#2f5b85" stroke="#37669a" stroke-width="1"/></g></svg>
<div class="t" style="left:795.67px;top:588.70px;font-size:9.2px;line-height:9.2px;color:#5f6368;transform:rotate(-45deg);transform-origin:50% 50%">value 1</div>
<div class="t" style="left:839.77px;top:588.00px;font-size:9.2px;line-height:9.2px;color:#5f6368;transform:rotate(-45deg);transform-origin:50% 50%">value 3</div>
<div class="t" style="left:599.28px;top:728.67px;font-size:9.01px;line-height:9.01px;color:#5f6368;transform:scaleX(1.0567);transform-origin:0 0;">40</div>
<div class="t" style="left:761.77px;top:732.87px;font-size:9.01px;line-height:9.01px;color:#5f6368;transform:scaleX(1.0041);transform-origin:0 0;">value 1</div>
<div class="b" style="left:800px;top:734px;width:58.3px;height:6px;background:#36387a"></div>
<svg class="b" style="left:56.5px;top:491px;overflow:hidden" width="488.8" height="248.5" viewBox="0 0 488.8 248.5"><g transform="translate(-56.5,-491)"><rect x="56.5" y="491" width="488.8" height="248.5" fill="#cbc7c2"/><polygon points="545.5,491.0 545.5,492.5 543.4,492.7 536.4,498.9 530.9,502.8 524.7,505.2 516.9,507.5 509.0,511.4 502.8,515.3 497.3,520.8 491.9,524.7 485.6,524.7 482.5,517.7 480.2,511.4 476.2,510.7 470.0,513.8 461.9,516.4 455.0,520.5 452.4,521.0 447.0,525.4 445.0,533.5 449.0,537.6 453.7,539.0 455.1,548.4 447.0,545.7 440.2,548.4 432.0,551.1 423.3,552.5 418.5,553.9 417.2,557.9 418.5,563.3 416.5,570.0 409.6,577.7 405.2,586.4 402.3,595.1 403.8,600.9 406.7,608.1 405.2,615.4 395.1,622.6 386.4,627.0 377.7,635.7 369.0,641.4 360.4,645.8 354.6,654.6 353.9,663.3 356.0,673.5 359.0,683.8 363.3,695.4 366.2,704.2 364.8,712.9 360.4,716.3 353.6,715.4 349.7,707.6 345.3,698.8 341.2,689.6 337.5,679.4 334.2,670.6 328.3,669.2 319.6,669.2 312.3,666.2 303.5,665.5 292.0,666.4 289.4,674.2 285.4,680.8 280.1,679.5 272.2,678.2 261.7,673.0 251.1,671.6 243.2,673.0 235.3,675.6 227.4,680.8 219.5,688.7 215.6,695.3 216.9,705.9 214.3,713.8 212.9,724.3 211.6,739.5 545.5,739.5" fill="#8aa8ae" stroke="#a3c0c4" stroke-width="3" stroke-linejoin="round"/><polygon points="545.5,491.0 545.5,492.5 543.4,492.7 536.4,498.9 530.9,502.8 524.7,505.2 516.9,507.5 509.0,511.4 502.8,515.3 497.3,520.8 491.9,524.7 485.6,524.7 482.5,517.7 480.2,511.4 476.2,510.7 470.0,513.8 461.9,516.4 455.0,520.5 452.4,521.0 447.0,525.4 445.0,533.5 449.0,537.6 453.7,539.0 455.1,548.4 447.0,545.7 440.2,548.4 432.0,551.1 423.3,552.5 418.5,553.9 417.2,557.9 418.5,563.3 416.5,570.0 409.6,577.7 405.2,586.4 402.3,595.1 403.8,600.9 406.7,608.1 405.2,615.4 395.1,622.6 386.4,627.0 377.7,635.7 369.0,641.4 360.4,645.8 354.6,654.6 353.9,663.3 356.0,673.5 359.0,683.8 363.3,695.4 366.2,704.2 364.8,712.9 360.4,716.3 353.6,715.4 349.7,707.6 345.3,698.8 341.2,689.6 337.5,679.4 334.2,670.6 328.3,669.2 319.6,669.2 312.3,666.2 303.5,665.5 292.0,666.4 289.4,674.2 285.4,680.8 280.1,679.5 272.2,678.2 261.7,673.0 251.1,671.6 243.2,673.0 235.3,675.6 227.4,680.8 219.5,688.7 215.6,695.3 216.9,705.9 214.3,713.8 212.9,724.3 211.6,739.5 545.5,739.5" fill="#8aa8ae" stroke="#74879a" stroke-width="1"/><polygon points="480.2,510.7 485.6,505.2 493.4,499.7 499.7,496.6 504.4,498.2 499.7,501.3 493.4,503.6 488.0,507.5 485.6,513.8 482.5,513.8" fill="#8aa8ae" stroke="#a3c0c4" stroke-width="3" stroke-linejoin="round"/><polygon points="480.2,510.7 485.6,505.2 493.4,499.7 499.7,496.6 504.4,498.2 499.7,501.3 493.4,503.6 488.0,507.5 485.6,513.8 482.5,513.8" fill="#8aa8ae" stroke="#74879a" stroke-width="0.8"/><ellipse cx="539.7" cy="515.7" rx="4.6" ry="3.2" fill="none" stroke="#74879a" stroke-width="0.8"/><ellipse cx="497.8" cy="645.2" rx="3.2" ry="2.4" transform="rotate(-20 497.8 645.2)" fill="none" stroke="#7a8596" stroke-width="0.9"/><polygon points="296.2,740.0 306.5,734.8 328.3,733.3 350.2,731.9 364.8,733.3 379.4,740.0" fill="#cbc7c2" stroke="#74879a" stroke-width="0.8"/><polygon points="56.5,672.0 64.7,677.8 66.9,688.0 71.9,698.1 82.1,706.8 85.7,717.0 90.8,724.9 100.9,732.2 107.4,739.5 56.5,739.5" fill="#8aa8ae" stroke="#a3c0c4" stroke-width="3" stroke-linejoin="round"/><polygon points="56.5,672.0 64.7,677.8 66.9,688.0 71.9,698.1 82.1,706.8 85.7,717.0 90.8,724.9 100.9,732.2 107.4,739.5 56.5,739.5" fill="#8aa8ae" stroke="#74879a" stroke-width="1"/><polygon points="62.5,651.7 69.8,651.7 81.4,667.7 84.3,679.3 96.6,689.4 107.4,701.0 111.8,709.0 121.9,717.7 132.1,728.6 137.2,739.5 108.9,739.5 111.1,731.4 106.7,724.2 99.5,719.9 95.1,708.3 92.2,698.1 82.1,688.0 74.8,677.8 64.7,667.7 61.8,654.6" fill="#8aa8ae" stroke="#a3c0c4" stroke-width="3" stroke-linejoin="round"/><polygon points="62.5,651.7 69.8,651.7 81.4,667.7 84.3,679.3 96.6,689.4 107.4,701.0 111.8,709.0 121.9,717.7 132.1,728.6 137.2,739.5 108.9,739.5 111.1,731.4 106.7,724.2 99.5,719.9 95.1,708.3 92.2,698.1 82.1,688.0 74.8,677.8 64.7,667.7 61.8,654.6" fill="#8aa8ae" stroke="#74879a" stroke-width="1"/><polygon points="300.8,491.0 296.2,504.0 299.7,515.5 297.4,529.2 300.8,543.0 306.6,542.5 312.3,531.5 310.7,517.8 314.6,506.3 323.7,498.3 334.0,494.9 339.8,501.7 344.4,510.9 337.5,516.6 331.8,517.8 335.2,520.1 343.2,522.4 342.1,531.5 338.6,537.3 346.7,529.2 351.2,515.5 358.1,509.8 369.6,510.9 365.0,501.7 355.8,494.9 355.8,491.0" fill="#93b1b6" stroke="#a3c0c4" stroke-width="2.2" stroke-linejoin="round"/><polygon points="300.8,491.0 296.2,504.0 299.7,515.5 297.4,529.2 300.8,543.0 306.6,542.5 312.3,531.5 310.7,517.8 314.6,506.3 323.7,498.3 334.0,494.9 339.8,501.7 344.4,510.9 337.5,516.6 331.8,517.8 335.2,520.1 343.2,522.4 342.1,531.5 338.6,537.3 346.7,529.2 351.2,515.5 358.1,509.8 369.6,510.9 365.0,501.7 355.8,494.9 355.8,491.0" fill="#93b1b6" stroke="#7f96a3" stroke-width="0.6"/><polygon points="337.5,540.7 349.0,537.3 365.0,530.4 374.2,527.0 371.9,531.5 360.4,538.4 346.7,544.1 338.6,544.1" fill="#93b1b6" stroke="#a3c0c4" stroke-width="2.2" stroke-linejoin="round"/><polygon points="337.5,540.7 349.0,537.3 365.0,530.4 374.2,527.0 371.9,531.5 360.4,538.4 346.7,544.1 338.6,544.1" fill="#93b1b6" stroke="#7f96a3" stroke-width="0.6"/><polygon points="369.6,520.1 381.0,518.9 394.8,515.5 397.1,520.1 383.3,523.5 371.9,523.5" fill="#93b1b6" stroke="#a3c0c4" stroke-width="2.2" stroke-linejoin="round"/><polygon points="369.6,520.1 381.0,518.9 394.8,515.5 397.1,520.1 383.3,523.5 371.9,523.5" fill="#93b1b6" stroke="#7f96a3" stroke-width="0.6"/><polygon points="397.5,568.0 399.5,572.0 401.0,582.0 402.5,592.0 403.5,601.0 401.5,601.0 399.5,592.0 397.5,582.0 396.0,572.0" fill="#8aa8ae" stroke="#74879a" stroke-width="0.6"/><polygon points="406.0,567.0 408.5,569.0 409.5,576.0 407.5,578.0 406.5,572.0" fill="#8aa8ae" stroke="#74879a" stroke-width="0.6"/><polyline points="369.0,694.0 380.0,697.0 392.0,702.0 402.0,711.0 410.0,724.0 416.0,739.0" fill="none" stroke="#7c8c9c" stroke-width="0.8"/><polyline points="372.0,712.0 380.0,716.0 386.0,726.0 390.0,739.0" fill="none" stroke="#7c8c9c" stroke-width="0.7"/><polyline points="360.4,716.3 352.0,719.5 344.0,721.5 339.0,720.0" fill="none" stroke="#7c8c9c" stroke-width="0.8"/><ellipse cx="337" cy="719.5" rx="2" ry="1.6" fill="none" stroke="#7c8c9c" stroke-width="0.8"/><polyline points="156.3,491.0 156.3,551.0" fill="none" stroke="#aaa3aa" stroke-width="0.7"/><polyline points="95.0,503.0 156.3,503.0" fill="none" stroke="#aaa3aa" stroke-width="0.7"/><polyline points="95.0,503.0 95.0,551.0" fill="none" stroke="#aaa3aa" stroke-width="0.7"/><polyline points="156.3,527.8 220.0,527.8" fill="none" stroke="#aaa3aa" stroke-width="0.7"/><polyline points="113.3,551.0 113.3,654.0" fill="none" stroke="#aaa3aa" stroke-width="0.7"/><polyline points="173.0,551.0 173.0,594.0" fill="none" stroke="#aaa3aa" stroke-width="0.7"/><polyline points="173.0,563.0 236.0,563.0" fill="none" stroke="#aaa3aa" stroke-width="0.7"/><polyline points="69.0,595.5 236.0,595.5" fill="none" stroke="#aaa3aa" stroke-width="0.7"/><polyline points="82.0,551.0 82.0,739.0" fill="none" stroke="#aaa3aa" stroke-width="0.7"/><polyline points="191.4,595.5 191.4,623.0" fill="none" stroke="#aaa3aa" stroke-width="0.7"/><polyline points="238.3,563.0 238.3,636.0" fill="none" stroke="#aaa3aa" stroke-width="0.7"/><polyline points="222.7,522.5 264.0,522.5" fill="none" stroke="#aaa3aa" stroke-width="0.7"/><polyline points="220.0,491.0 220.0,542.0 226.0,552.0 235.7,568.0 238.3,575.0" fill="none" stroke="#aaa3aa" stroke-width="0.7"/><polyline points="254.0,491.0 262.0,520.0 270.0,540.0 274.8,555.0 282.0,575.0 290.0,594.0 284.0,610.0 280.0,620.0 275.0,640.0 272.0,660.0 270.0,670.0" fill="none" stroke="#aaa3aa" stroke-width="0.7"/><polyline points="264.0,533.0 306.0,533.0" fill="none" stroke="#aaa3aa" stroke-width="0.7"/><polyline points="164.0,595.5 164.0,649.0" fill="none" stroke="#aaa3aa" stroke-width="0.7"/><polyline points="120.5,649.0 164.0,649.0" fill="none" stroke="#aaa3aa" stroke-width="0.7"/><polyline points="191.4,623.0 238.3,623.0" fill="none" stroke="#aaa3aa" stroke-width="0.7"/><polyline points="243.5,636.0 243.5,662.0 246.0,672.0" fill="none" stroke="#aaa3aa" stroke-width="0.7"/><polyline points="243.5,636.0 269.5,636.0" fill="none" stroke="#aaa3aa" stroke-width="0.7"/><polyline points="269.5,620.0 269.5,666.0" fill="none" stroke="#aaa3aa" stroke-width="0.7"/><polyline points="293.0,600.0 293.0,666.0" fill="none" stroke="#aaa3aa" stroke-width="0.7"/><polyline points="300.0,491.0 300.0,600.0" fill="none" stroke="#aaa3aa" stroke-width="0.7"/><polyline points="323.6,542.0 323.6,599.0" fill="none" stroke="#aaa3aa" stroke-width="0.7"/><polyline points="300.0,542.0 336.0,542.0" fill="none" stroke="#aaa3aa" stroke-width="0.7"/><polyline points="360.0,539.5 404.0,539.5" fill="none" stroke="#aaa3aa" stroke-width="0.7"/><polyline points="360.0,539.5 360.0,565.5 409.6,565.5" fill="none" stroke="#aaa3aa" stroke-width="0.7"/><polyline points="360.0,565.5 352.0,578.0 347.0,590.0 340.0,594.0" fill="none" stroke="#aaa3aa" stroke-width="0.7"/><polyline points="295.0,599.0 399.0,599.0" fill="none" stroke="#aaa3aa" stroke-width="0.7"/><polyline points="422.6,503.0 422.6,539.5 418.0,548.0" fill="none" stroke="#aaa3aa" stroke-width="0.7"/><polyline points="443.4,498.0 443.4,539.5" fill="none" stroke="#aaa3aa" stroke-width="0.7"/><polyline points="422.6,539.5 443.4,539.5" fill="none" stroke="#aaa3aa" stroke-width="0.7"/><polyline points="318.4,610.0 318.4,662.0" fill="none" stroke="#aaa3aa" stroke-width="0.7"/><polyline points="347.0,620.0 347.0,662.0" fill="none" stroke="#aaa3aa" stroke-width="0.7"/><polyline points="295.0,662.0 347.0,662.0" fill="none" stroke="#aaa3aa" stroke-width="0.7"/><polyline points="295.0,618.0 357.5,618.0" fill="none" stroke="#aaa3aa" stroke-width="0.7"/><polyline points="323.6,599.0 323.6,618.0" fill="none" stroke="#aaa3aa" stroke-width="0.7"/><polyline points="118.5,654.3 118.5,709.0 135.0,728.0" fill="none" stroke="#aaa3aa" stroke-width="0.7"/><polyline points="150.2,667.7 160.0,690.0 175.0,700.0 180.0,720.0" fill="none" stroke="#aaa3aa" stroke-width="0.7"/><polyline points="180.0,690.0 200.0,700.0 195.0,725.0" fill="none" stroke="#aaa3aa" stroke-width="0.7"/><polyline points="61.8,641.6 82.1,650.3 95.1,655.4 119.8,655.4 120.5,651.0 134.3,650.0 147.0,662.0 160.0,675.0 170.6,671.0 181.0,675.0 191.4,688.0 201.8,698.5 213.0,707.7" fill="none" stroke="#a295a6" stroke-width="1"/><polyline points="337.0,542.0 346.0,535.0 344.0,520.0 336.0,498.0 330.0,491.0" fill="none" stroke="#a295a6" stroke-width="0.8"/><polyline points="374.0,529.4 368.0,522.0 397.0,514.0 420.0,500.0 430.0,496.0 445.0,491.0" fill="none" stroke="#a295a6" stroke-width="0.8"/><rect x="56.5" y="550.8" width="488.8" height="0.9" fill="#5f6366"/></g></svg>
<div class="b" style="left:56.5px;top:491px;width:488.8px;height:248.5px;overflow:hidden"><div class="b" style="left:-56.5px;top:-491px;width:960px;height:759px">
<div class="t" style="left:355.79px;top:510.44px;font-size:8.58px;line-height:8.58px;color:#3f3f3f;transform:scaleX(1.0689);transform-origin:0 0;text-shadow:0 0 1px rgba(255,255,255,.5),0 0 2px rgba(255,255,255,.3);-webkit-text-stroke:0.25px currentColor;">Toronto</div>
<div class="t" style="left:398.68px;top:556.94px;font-size:8.58px;line-height:8.58px;color:#3f3f3f;transform:scaleX(1.0294);transform-origin:0 0;text-shadow:0 0 1px rgba(255,255,255,.5),0 0 2px rgba(255,255,255,.3);-webkit-text-stroke:0.25px currentColor;">New York</div>
<div class="t" style="left:367.46px;top:579.34px;font-size:8.58px;line-height:8.58px;color:#3f3f3f;transform:scaleX(1.0699);transform-origin:0 0;text-shadow:0 0 1px rgba(255,255,255,.5),0 0 2px rgba(255,255,255,.3);-webkit-text-stroke:0.25px currentColor;">Washington</div>
<div class="t" style="left:389.08px;top:487.74px;font-size:8.58px;line-height:8.58px;color:#3f3f3f;transform:scaleX(1.0383);transform-origin:0 0;text-shadow:0 0 1px rgba(255,255,255,.5),0 0 2px rgba(255,255,255,.3);-webkit-text-stroke:0.25px currentColor;">Ottawa</div>
<div class="t" style="left:70.06px;top:624.04px;font-size:8.58px;line-height:8.58px;color:#3f3f3f;transform:scaleX(1.0460);transform-origin:0 0;text-shadow:0 0 1px rgba(255,255,255,.5),0 0 2px rgba(255,255,255,.3);-webkit-text-stroke:0.25px currentColor;">Phoenix</div>
<div class="t" style="left:298.30px;top:731.74px;font-size:8.58px;line-height:8.58px;color:#3f3f3f;transform:scaleX(0.9884);transform-origin:0 0;text-shadow:0 0 1px rgba(255,255,255,.5),0 0 2px rgba(255,255,255,.3);-webkit-text-stroke:0.25px currentColor;">La Habana</div>
<div class="t" style="left:171.16px;top:594.47px;font-size:9.01px;line-height:9.01px;color:#76697b;transform:scaleX(1.0665);transform-origin:0 0;text-shadow:0 0 1px rgba(255,255,255,.5),0 0 2px rgba(255,255,255,.3);-webkit-text-stroke:0.25px currentColor;">United States</div>
<div class="t" style="left:156.83px;top:727.87px;font-size:9.01px;line-height:9.01px;color:#76697b;transform:scaleX(1.0430);transform-origin:0 0;text-shadow:0 0 1px rgba(255,255,255,.5),0 0 2px rgba(255,255,255,.3);-webkit-text-stroke:0.25px currentColor;">México</div>
<div class="t" style="left:359.39px;top:723.17px;font-size:9.01px;line-height:9.01px;color:#76697b;transform:scaleX(1.0313);transform-origin:0 0;text-shadow:0 0 1px rgba(255,255,255,.5),0 0 2px rgba(255,255,255,.3);-webkit-text-stroke:0.25px currentColor;">The Bahamas</div>
<div class="b" style="left:400.4px;top:496.2px;width:2.6px;height:2.6px;border:0.7px solid #6a6a6a;border-radius:50%;background:#8a8a8a"></div>
<div class="b" style="left:388.7px;top:572.8px;width:2.6px;height:2.6px;border:0.7px solid #6a6a6a;border-radius:50%;background:#8a8a8a"></div>
<div class="b" style="left:84.5px;top:632px;width:2.6px;height:2.6px;border:0.7px solid #6a6a6a;border-radius:50%;background:#8a8a8a"></div>
<div class="b" style="left:342px;top:733px;width:2.6px;height:2.6px;border:0.7px solid #6a6a6a;border-radius:50%;background:#8a8a8a"></div>
</div></div>
<div class="b" style="left:65.9px;top:499.9px;width:23.2px;height:46.1px;box-sizing:border-box;border:1.3px solid #a9a9a9;border-radius:3px;background:#fff"></div>
<div class="b" style="left:67.2px;top:523px;width:20.6px;height:0.8px;background:#ccc"></div>
<svg class="b" style="left:71px;top:505px;" width="13" height="13" viewBox="0 0 13 13"><path d="M6.5 1.5 v10 M1.5 6.5 h10" stroke="#111" stroke-width="1.8"/></svg>
<svg class="b" style="left:71px;top:529px;" width="13" height="13" viewBox="0 0 13 13"><path d="M1.5 6.5 h10" stroke="#111" stroke-width="1.8"/></svg>
<div class="b" style="left:146.4px;top:545.8px;width:13px;height:14px;border-radius:50% 50% 40% 40%;background:rgba(0,0,0,.07);filter:blur(2.2px);transform:skewX(-42deg);transform-origin:0 100%"></div>
<svg class="b" style="left:136.0px;top:530.0px" width="18.8" height="30.8" viewBox="0 0 25 41"><defs><linearGradient id="mg" x1="0" y1="0" x2="0" y2="1"><stop offset="0" stop-color="#2e8ad8"/><stop offset="1" stop-color="#2570bd"/></linearGradient></defs><path d="M12.5 0.6 C5.9 0.6 0.6 5.9 0.6 12.5 C0.6 15.8 1.7 18.4 3.2 21 L12.5 40.4 L21.8 21 C23.3 18.4 24.4 15.8 24.4 12.5 C24.4 5.9 19.1 0.6 12.5 0.6z" fill="url(#mg)" stroke="#2566a3" stroke-width="1.1"/><circle cx="12.5" cy="12.5" r="4.3" fill="#fff"/></svg>
<div class="b" style="left:149.4px;top:548.8px;width:13px;height:14px;border-radius:50% 50% 40% 40%;background:rgba(0,0,0,.07);filter:blur(2.2px);transform:skewX(-42deg);transform-origin:0 100%"></div>
<svg class="b" style="left:139.0px;top:533.0px" width="18.8" height="30.8" viewBox="0 0 25 41"><defs><linearGradient id="mg" x1="0" y1="0" x2="0" y2="1"><stop offset="0" stop-color="#2e8ad8"/><stop offset="1" stop-color="#2570bd"/></linearGradient></defs><path d="M12.5 0.6 C5.9 0.6 0.6 5.9 0.6 12.5 C0.6 15.8 1.7 18.4 3.2 21 L12.5 40.4 L21.8 21 C23.3 18.4 24.4 15.8 24.4 12.5 C24.4 5.9 19.1 0.6 12.5 0.6z" fill="url(#mg)" stroke="#2566a3" stroke-width="1.1"/><circle cx="12.5" cy="12.5" r="4.3" fill="#fff"/></svg>
<div class="b" style="left:419.8px;top:539.3px;width:13px;height:14px;border-radius:50% 50% 40% 40%;background:rgba(0,0,0,.07);filter:blur(2.2px);transform:skewX(-42deg);transform-origin:0 100%"></div>
<svg class="b" style="left:409.40000000000003px;top:523.5px" width="18.8" height="30.8" viewBox="0 0 25 41"><defs><linearGradient id="mg" x1="0" y1="0" x2="0" y2="1"><stop offset="0" stop-color="#2e8ad8"/><stop offset="1" stop-color="#2570bd"/></linearGradient></defs><path d="M12.5 0.6 C5.9 0.6 0.6 5.9 0.6 12.5 C0.6 15.8 1.7 18.4 3.2 21 L12.5 40.4 L21.8 21 C23.3 18.4 24.4 15.8 24.4 12.5 C24.4 5.9 19.1 0.6 12.5 0.6z" fill="url(#mg)" stroke="#2566a3" stroke-width="1.1"/><circle cx="12.5" cy="12.5" r="4.3" fill="#fff"/></svg>
<div class="b" style="left:367.8px;top:625.5px;width:13px;height:14px;border-radius:50% 50% 40% 40%;background:rgba(0,0,0,.07);filter:blur(2.2px);transform:skewX(-42deg);transform-origin:0 100%"></div>
<svg class="b" style="left:357.40000000000003px;top:609.7px" width="18.8" height="30.8" viewBox="0 0 25 41"><defs><linearGradient id="mg" x1="0" y1="0" x2="0" y2="1"><stop offset="0" stop-color="#2e8ad8"/><stop offset="1" stop-color="#2570bd"/></linearGradient></defs><path d="M12.5 0.6 C5.9 0.6 0.6 5.9 0.6 12.5 C0.6 15.8 1.7 18.4 3.2 21 L12.5 40.4 L21.8 21 C23.3 18.4 24.4 15.8 24.4 12.5 C24.4 5.9 19.1 0.6 12.5 0.6z" fill="url(#mg)" stroke="#2566a3" stroke-width="1.1"/><circle cx="12.5" cy="12.5" r="4.3" fill="#fff"/></svg>
<div class="b" style="left:212.5px;top:650px;width:13px;height:14px;border-radius:50% 50% 40% 40%;background:rgba(0,0,0,.07);filter:blur(2.2px);transform:skewX(-42deg);transform-origin:0 100%"></div>
<svg class="b" style="left:202.1px;top:634.2px" width="18.8" height="30.8" viewBox="0 0 25 41"><defs><linearGradient id="mg" x1="0" y1="0" x2="0" y2="1"><stop offset="0" stop-color="#2e8ad8"/><stop offset="1" stop-color="#2570bd"/></linearGradient></defs><path d="M12.5 0.6 C5.9 0.6 0.6 5.9 0.6 12.5 C0.6 15.8 1.7 18.4 3.2 21 L12.5 40.4 L21.8 21 C23.3 18.4 24.4 15.8 24.4 12.5 C24.4 5.9 19.1 0.6 12.5 0.6z" fill="url(#mg)" stroke="#2566a3" stroke-width="1.1"/><circle cx="12.5" cy="12.5" r="4.3" fill="#fff"/></svg>
<div class="b" style="left:233.3px;top:654.8px;width:13px;height:14px;border-radius:50% 50% 40% 40%;background:rgba(0,0,0,.07);filter:blur(2.2px);transform:skewX(-42deg);transform-origin:0 100%"></div>
<svg class="b" style="left:222.9px;top:639.0px" width="18.8" height="30.8" viewBox="0 0 25 41"><defs><linearGradient id="mg" x1="0" y1="0" x2="0" y2="1"><stop offset="0" stop-color="#2e8ad8"/><stop offset="1" stop-color="#2570bd"/></linearGradient></defs><path d="M12.5 0.6 C5.9 0.6 0.6 5.9 0.6 12.5 C0.6 15.8 1.7 18.4 3.2 21 L12.5 40.4 L21.8 21 C23.3 18.4 24.4 15.8 24.4 12.5 C24.4 5.9 19.1 0.6 12.5 0.6z" fill="url(#mg)" stroke="#2566a3" stroke-width="1.1"/><circle cx="12.5" cy="12.5" r="4.3" fill="#fff"/></svg>
<div class="b" style="left:229.3px;top:656.5px;width:13px;height:14px;border-radius:50% 50% 40% 40%;background:rgba(0,0,0,.07);filter:blur(2.2px);transform:skewX(-42deg);transform-origin:0 100%"></div>
<svg class="b" style="left:218.9px;top:640.7px" width="18.8" height="30.8" viewBox="0 0 25 41"><defs><linearGradient id="mg" x1="0" y1="0" x2="0" y2="1"><stop offset="0" stop-color="#2e8ad8"/><stop offset="1" stop-color="#2570bd"/></linearGradient></defs><path d="M12.5 0.6 C5.9 0.6 0.6 5.9 0.6 12.5 C0.6 15.8 1.7 18.4 3.2 21 L12.5 40.4 L21.8 21 C23.3 18.4 24.4 15.8 24.4 12.5 C24.4 5.9 19.1 0.6 12.5 0.6z" fill="url(#mg)" stroke="#2566a3" stroke-width="1.1"/><circle cx="12.5" cy="12.5" r="4.3" fill="#fff"/></svg>
<div class="b" style="left:344.6px;top:678.6px;width:13px;height:14px;border-radius:50% 50% 40% 40%;background:rgba(0,0,0,.07);filter:blur(2.2px);transform:skewX(-42deg);transform-origin:0 100%"></div>
<svg class="b" style="left:334.20000000000005px;top:662.8000000000001px" width="18.8" height="30.8" viewBox="0 0 25 41"><defs><linearGradient id="mg" x1="0" y1="0" x2="0" y2="1"><stop offset="0" stop-color="#2e8ad8"/><stop offset="1" stop-color="#2570bd"/></linearGradient></defs><path d="M12.5 0.6 C5.9 0.6 0.6 5.9 0.6 12.5 C0.6 15.8 1.7 18.4 3.2 21 L12.5 40.4 L21.8 21 C23.3 18.4 24.4 15.8 24.4 12.5 C24.4 5.9 19.1 0.6 12.5 0.6z" fill="url(#mg)" stroke="#2566a3" stroke-width="1.1"/><circle cx="12.5" cy="12.5" r="4.3" fill="#fff"/></svg>
<div class="b" style="left:366.7px;top:692.7px;width:13px;height:14px;border-radius:50% 50% 40% 40%;background:rgba(0,0,0,.07);filter:blur(2.2px);transform:skewX(-42deg);transform-origin:0 100%"></div>
<svg class="b" style="left:356.3px;top:676.9000000000001px" width="18.8" height="30.8" viewBox="0 0 25 41"><defs><linearGradient id="mg" x1="0" y1="0" x2="0" y2="1"><stop offset="0" stop-color="#2e8ad8"/><stop offset="1" stop-color="#2570bd"/></linearGradient></defs><path d="M12.5 0.6 C5.9 0.6 0.6 5.9 0.6 12.5 C0.6 15.8 1.7 18.4 3.2 21 L12.5 40.4 L21.8 21 C23.3 18.4 24.4 15.8 24.4 12.5 C24.4 5.9 19.1 0.6 12.5 0.6z" fill="url(#mg)" stroke="#2566a3" stroke-width="1.1"/><circle cx="12.5" cy="12.5" r="4.3" fill="#fff"/></svg>
<div class="b" style="left:364.7px;top:694.8px;width:13px;height:14px;border-radius:50% 50% 40% 40%;background:rgba(0,0,0,.07);filter:blur(2.2px);transform:skewX(-42deg);transform-origin:0 100%"></div>
<svg class="b" style="left:354.3px;top:679.0px" width="18.8" height="30.8" viewBox="0 0 25 41"><defs><linearGradient id="mg" x1="0" y1="0" x2="0" y2="1"><stop offset="0" stop-color="#2e8ad8"/><stop offset="1" stop-color="#2570bd"/></linearGradient></defs><path d="M12.5 0.6 C5.9 0.6 0.6 5.9 0.6 12.5 C0.6 15.8 1.7 18.4 3.2 21 L12.5 40.4 L21.8 21 C23.3 18.4 24.4 15.8 24.4 12.5 C24.4 5.9 19.1 0.6 12.5 0.6z" fill="url(#mg)" stroke="#2566a3" stroke-width="1.1"/><circle cx="12.5" cy="12.5" r="4.3" fill="#fff"/></svg>
</div>
</body></html>
